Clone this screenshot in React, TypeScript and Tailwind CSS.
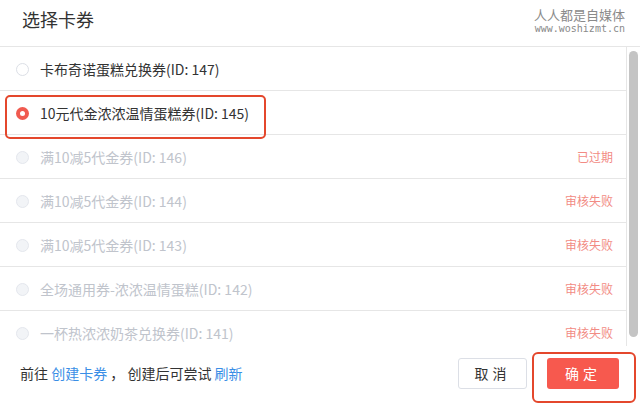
import * as React from "react"

interface Coupon {
  id: number
  name: string
  status?: string
  disabled?: boolean
}

const coupons: Coupon[] = [
  { id: 147, name: "卡布奇诺蛋糕兑换券" },
  { id: 145, name: "10元代金浓浓温情蛋糕券" },
  { id: 146, name: "满10减5代金券", status: "已过期", disabled: true },
  { id: 144, name: "满10减5代金券", status: "审核失败", disabled: true },
  { id: 143, name: "满10减5代金券", status: "审核失败", disabled: true },
  { id: 142, name: "全场通用券-浓浓温情蛋糕", status: "审核失败", disabled: true },
  { id: 141, name: "一杯热浓浓奶茶兑换券", status: "审核失败", disabled: true },
]

function Radio({ checked, disabled }: { checked: boolean; disabled?: boolean }) {
  if (checked) {
    return (
      <span className="flex h-[13px] w-[13px] items-center justify-center rounded-full bg-[#f05a4f]">
        <span className="h-[5px] w-[5px] rounded-full bg-white" />
      </span>
    )
  }
  return (
    <span
      className={
        disabled
          ? "h-[13px] w-[13px] rounded-full border border-[#e4e7ed] bg-[#f2f4f7]"
          : "h-[13px] w-[13px] rounded-full border border-[#dcdfe6] bg-white"
      }
    />
  )
}

export default function App() {
  const [selected, setSelected] = React.useState(145)

  return (
    <div className="relative h-[410px] w-[640px] overflow-hidden bg-white font-['Noto_Sans_CJK_SC','Noto_Sans',sans-serif]">
      {/* header */}
      <div className="flex h-[47px] items-start justify-between border-b border-[#e6e6e6] pl-[22px] pr-[15px]">
        <div className="pt-[6px] text-[18px] leading-[26px] text-[#333]">选择卡券</div>
        <div className="flex flex-col items-end pt-[6px] text-[#8a8a8a]">
          <span className="text-[13px] leading-[17px]">人人都是自媒体</span>
          <span className="font-['DejaVu_Sans_Mono',monospace] text-[10px] leading-[12px]">www.woshizmt.cn</span>
        </div>
      </div>

      {/* list */}
      <div className="flex h-[299px]">
        <div className="w-[627px] overflow-hidden border-r border-[#e6e6e6]">
          {coupons.map((c) => (
            <div
              key={c.id}
              onClick={() => !c.disabled && setSelected(c.id)}
              className="relative flex h-[44px] shrink-0 items-center justify-between border-b border-[#e6e6e6] pl-[16px] pr-[13px] pt-[1px] text-[14px]"
            >
              <div className="flex items-center gap-[11px]">
                <Radio checked={selected === c.id} disabled={c.disabled} />
                <span className={c.disabled ? "text-[#c0c4cc]" : "text-[#333]"}>
                  {c.name}(ID: {c.id})
                </span>
              </div>
              {c.status && <span className="text-[12px] text-[#f28b84]">{c.status}</span>}
              {selected === c.id && c.id === 145 && (
                <div className="pointer-events-none absolute left-[5px] top-[4px] h-[44px] w-[261px] rounded-[5px] border-2 border-[#e4472c]" />
              )}
            </div>
          ))}
        </div>
        <div className="flex-1 px-[2px] pt-[4px]">
          <div className="h-[286px] rounded-full bg-[#c4c4c4]" />
        </div>
      </div>

      {/* footer */}
      <div className="flex items-center justify-between pl-[20px] pr-[21px] pt-[12px]">
        <div className="text-[14px] text-[#333]">
          前往 <span className="text-[#3a8ee6]">创建卡券</span> ， 创建后可尝试{" "}
          <span className="text-[#3a8ee6]">刷新</span>
        </div>
        <div className="flex gap-[20px]">
          <button className="h-[31px] w-[69px] rounded-[3px] border border-[#dcdfe6] bg-white text-[14px] tracking-[4px] text-[#333]">
            取消
          </button>
          <div className="relative">
            <button className="h-[31px] w-[72px] rounded-[3px] bg-[#f7594e] text-[14px] tracking-[4px] text-white">
              确定
            </button>
            <div className="pointer-events-none absolute -left-[15px] -top-[6px] h-[51px] w-[104px] rounded-[6px] border-2 border-[#e4472c]" />
          </div>
        </div>
      </div>
    </div>
  )
}
